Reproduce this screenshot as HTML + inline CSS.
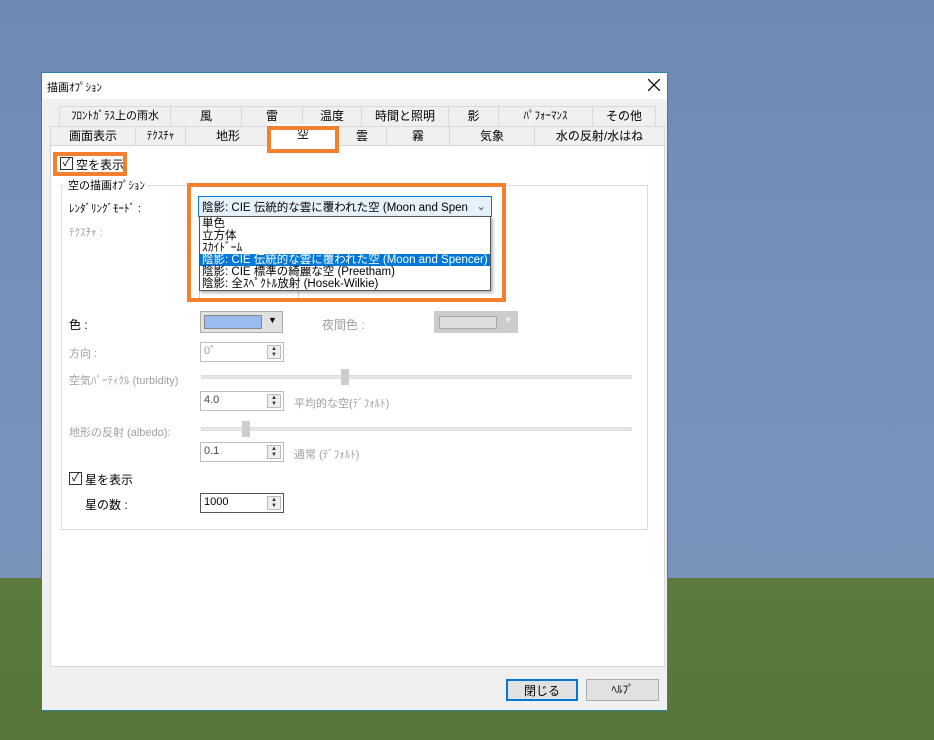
<!DOCTYPE html>
<html><head><meta charset="utf-8"><style>
*{margin:0;padding:0;box-sizing:border-box}
body{width:934px;height:740px;overflow:hidden;position:relative;font-family:"Liberation Sans","Noto Sans CJK JP",sans-serif;font-size:12px;color:#000;
background:linear-gradient(#7088b4 0,#7690bb 300px,#7a93bb 578px,#5c7a3c 578px,#56763a 740px)}
.a{position:absolute}
.dlg{left:41px;top:72px;width:627px;height:639px;background:#f0f0f0;border:1px solid #2d7fb0}
.tb{left:0;top:0;width:625px;height:26px;background:#fff}
.tab{position:absolute;height:20px;border:1px solid #d9d9d9;border-bottom:none;background:#f0f0f0;text-align:center;line-height:19px;font-size:12px;white-space:nowrap;overflow:hidden}
.panel{left:50px;top:145px;width:615px;height:522px;background:#fff;border:1px solid #d9d9d9}
.or{position:absolute;border:4px solid #f4802e}
.g{color:#a0a0a0}
.spin{position:absolute;width:84px;height:20px;border:1px solid #bcbcbc;background:#fff;font-size:11px;padding:2px 3px}
.spin i{position:absolute;right:2px;top:2px;width:14px;height:14px;border:1px solid #bbb;background:#eee;font-style:normal;font-size:6px;line-height:6px;text-align:center;color:#333}
.sl{position:absolute;height:4px;background:#e7e7e7;border:1px solid #ddd}
.th{position:absolute;width:8px;height:16px;background:#cdcdcd}
.cb{position:absolute;width:13px;height:13px;border:1px solid #333;background:#fff;font-size:11px;line-height:11px;text-align:center}
.btn{position:absolute;height:22px;background:#e1e1e1;border:1px solid #adadad;text-align:center;line-height:20px}
</style></head><body>
<div class="a dlg">
<div class="a tb"></div>
<div class="a" style="left:5px;top:6px;font-size:11px">描画ｵﾌﾟｼｮﾝ</div>
<svg class="a" style="left:606px;top:6px" width="12" height="12"><path d="M0 0L12 12M12 0L0 12" stroke="#000" stroke-width="1.2"/></svg>
</div>
<div class="tab" style="left:59px;top:106px;width:112px;font-size:11px">ﾌﾛﾝﾄｶﾞﾗｽ上の雨水</div>
<div class="tab" style="left:170px;top:106px;width:72px">風</div>
<div class="tab" style="left:241px;top:106px;width:62px">雷</div>
<div class="tab" style="left:302px;top:106px;width:60px">温度</div>
<div class="tab" style="left:361px;top:106px;width:88px">時間と照明</div>
<div class="tab" style="left:448px;top:106px;width:51px">影</div>
<div class="tab" style="left:498px;top:106px;width:95px;font-size:11px">ﾊﾟﾌｫｰﾏﾝｽ</div>
<div class="tab" style="left:592px;top:106px;width:64px">その他</div>
<div class="tab" style="left:50px;top:126px;width:86px">画面表示</div>
<div class="tab" style="left:135px;top:126px;width:51px;font-size:11px">ﾃｸｽﾁｬ</div>
<div class="tab" style="left:185px;top:126px;width:86px">地形</div>
<div class="tab" style="left:337px;top:126px;width:50px">雲</div>
<div class="tab" style="left:386px;top:126px;width:64px">霧</div>
<div class="tab" style="left:449px;top:126px;width:86px">気象</div>
<div class="tab" style="left:534px;top:126px;width:131px">水の反射/水はね</div>
<div class="a panel"></div>
<div class="tab" style="left:268px;top:124px;width:70px;height:23px;background:#fff;border-color:#fff">空</div>
<div class="or" style="left:267px;top:126px;width:72px;height:27px"></div>
<div class="cb" style="left:60px;top:157px">✓</div>
<div class="a" style="left:76px;top:156px">空を表示</div>
<div class="or" style="left:53px;top:152px;width:74px;height:24px"></div>
<div class="a" style="left:61px;top:185px;width:587px;height:345px;border:1px solid #dcdcdc"></div>
<div class="a" style="left:66px;top:177px;background:#fff;padding:0 2px;font-size:11px">空の描画ｵﾌﾟｼｮﾝ</div>
<div class="a" style="left:69px;top:200px;font-size:11px">ﾚﾝﾀﾞﾘﾝｸﾞﾓｰﾄﾞ :</div>
<div class="a g" style="left:69px;top:224px;font-size:11px">ﾃｸｽﾁｬ :</div>
<div class="a" style="left:199px;top:214px;width:100px;height:86px;border:1px solid #ccc"></div>
<div class="a" style="left:198px;top:196px;width:294px;height:21px;background:#e5f1fb;border:1px solid #0078d7;font-size:11.5px;padding:2px 3px;white-space:nowrap;overflow:hidden">陰影: CIE 伝統的な雲に覆われた空 (Moon and Spen<span style="position:absolute;right:5px;color:#555">⌄</span></div>
<div class="a" style="left:199px;top:216px;width:292px;height:75px;background:#fff;border:1px solid #555;box-shadow:2px 2px 3px rgba(0,0,0,.3);font-size:11.5px;line-height:12px;padding-top:1px;white-space:nowrap">
<div style="padding-left:2px">単色</div><div style="padding-left:2px">立方体</div><div style="padding-left:2px">ｽｶｲﾄﾞｰﾑ</div>
<div style="padding-left:2px;background:#0078d7;color:#fff">陰影: CIE 伝統的な雲に覆われた空 (Moon and Spencer)</div>
<div style="padding-left:2px">陰影: CIE 標準の綺麗な空 (Preetham)</div><div style="padding-left:2px">陰影: 全ｽﾍﾟｸﾄﾙ放射 (Hosek-Wilkie)</div></div>
<div class="or" style="left:187px;top:183px;width:319px;height:119px"></div>
<div class="a" style="left:69px;top:316px">色 :</div>
<div class="a" style="left:200px;top:311px;width:83px;height:22px;border:1px solid #adadad;background:#e1e1e1"><div class="a" style="left:3px;top:3px;width:58px;height:14px;background:#99bbee;border:1px solid #888"></div><div class="a" style="left:67px;top:3px;font-size:9px">▼</div></div>
<div class="a g" style="left:322px;top:316px">夜間色 :</div>
<div class="a" style="left:434px;top:311px;width:84px;height:22px;border:1px solid #ccc;background:#ccc"><div class="a" style="left:4px;top:4px;width:58px;height:13px;background:#ddd;border:1px solid #aaa"></div><div class="a" style="left:69px;top:3px;font-size:9px;color:#eee">▼</div></div>
<div class="a g" style="left:69px;top:345px;font-size:11px">方向 :</div>
<div class="spin g" style="left:200px;top:342px">0˚<i>▲<br>▼</i></div>
<div class="a g" style="left:69px;top:372px;font-size:11px">空気ﾊﾟｰﾃｨｸﾙ (turbidity)</div>
<div class="sl" style="left:201px;top:375px;width:431px"></div><div class="th" style="left:341px;top:369px"></div>
<div class="spin" style="left:200px;top:391px;color:#444">4.0<i>▲<br>▼</i></div>
<div class="a g" style="left:294px;top:395px;font-size:11px">平均的な空(ﾃﾞﾌｫﾙﾄ)</div>
<div class="a g" style="left:69px;top:424px;font-size:11px">地形の反射 (albedo):</div>
<div class="sl" style="left:201px;top:427px;width:431px"></div><div class="th" style="left:242px;top:421px"></div>
<div class="spin" style="left:200px;top:442px;color:#444">0.1<i>▲<br>▼</i></div>
<div class="a g" style="left:294px;top:446px;font-size:11px">通常 (ﾃﾞﾌｫﾙﾄ)</div>
<div class="cb" style="left:69px;top:472px">✓</div>
<div class="a" style="left:85px;top:471px">星を表示</div>
<div class="a" style="left:85px;top:496px">星の数 :</div>
<div class="spin" style="left:200px;top:493px;border-color:#555">1000<i>▲<br>▼</i></div>
<div class="btn" style="left:506px;top:679px;width:72px;border:2px solid #0078d7">閉じる</div>
<div class="btn" style="left:586px;top:679px;width:73px;font-size:11px">ﾍﾙﾌﾟ</div>
</body></html>
